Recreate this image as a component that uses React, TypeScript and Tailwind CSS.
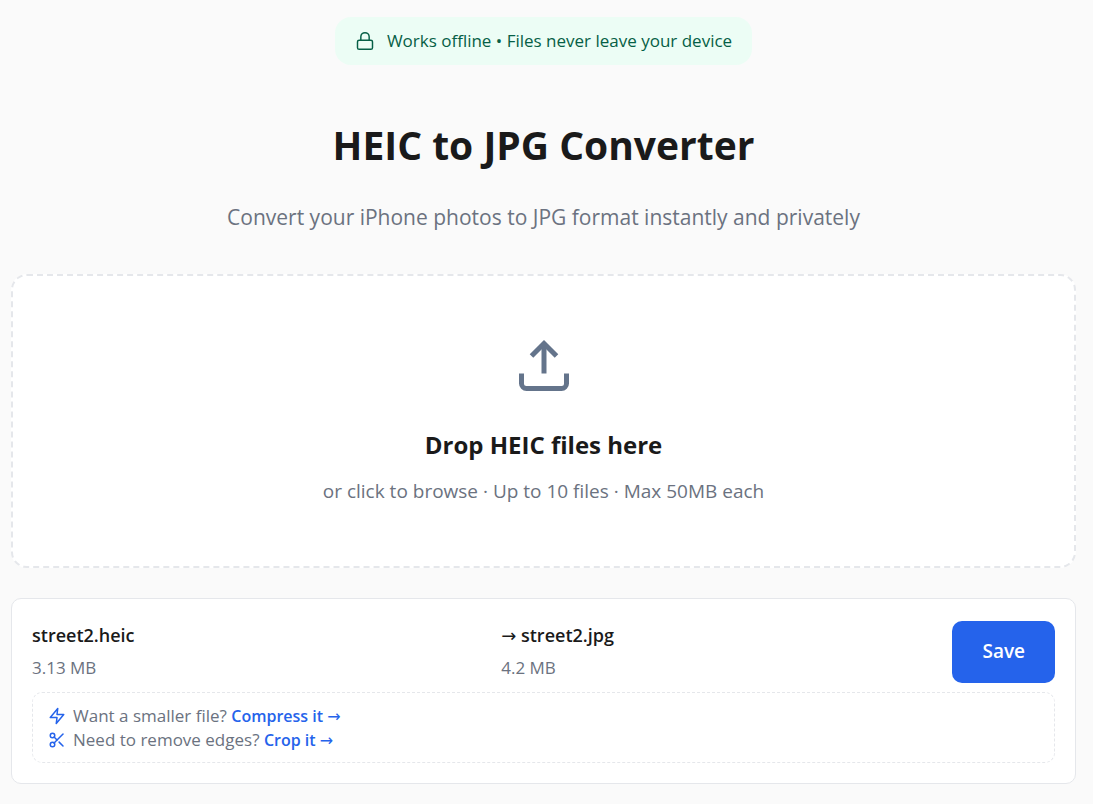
import React from 'react';
import { Lock, Scissors } from 'lucide-react';

const UploadIcon: React.FC = () => (
  <svg className="w-15 h-15 text-[#64748b]" viewBox="0 0 24 24" fill="none" stroke="currentColor" strokeWidth="2" aria-hidden="true">
    <path d="M21 15v4a2 2 0 0 1-2 2H5a2 2 0 0 1-2-2v-4" />
    <path d="M17 8l-5-5-5 5" />
    <path d="M12 3v12" />
  </svg>
);

const BoltIcon: React.FC = () => (
  <svg className="w-[18px] h-[18px] text-[#2563eb]" viewBox="0 0 24 24" fill="none" stroke="currentColor" strokeWidth="2" strokeLinecap="round" strokeLinejoin="round" aria-hidden="true">
    <path d="M13 2L3 14h9l-1 8 10-12h-9l1-8z" />
  </svg>
);

const Arrow: React.FC = () => <span className="font-['DejaVu_Sans',sans-serif] font-normal leading-none">→</span>;

const Header: React.FC = () => (
  <header className="flex flex-col items-center text-center">
    <div className="flex items-center gap-3 px-5 h-12 rounded-2xl bg-[#ecfdf5] text-[#065f46] text-[17px] font-medium">
      <Lock size={20} strokeWidth={1.75} aria-hidden="true" />
      <span>Works offline • Files never leave your device</span>
    </div>
    <h1 className="mt-[55px] text-[39px] leading-[50px] font-bold text-[#1a1a1a]">HEIC to JPG Converter</h1>
    <p className="mt-7 text-[21px] leading-[38px] text-[#6b7280]">
      Convert your iPhone photos to JPG format instantly and privately
    </p>
  </header>
);

const DropZone: React.FC = () => (
  <button
    type="button"
    className="mt-[38px] w-full flex flex-col items-center py-[60px] rounded-2xl border-2 border-dashed border-[#e5e7eb] bg-white cursor-pointer"
  >
    <UploadIcon />
    <span className="mt-[31px] text-2xl leading-[36px] font-bold text-[#1a1a1a]">Drop HEIC files here</span>
    <span className="mt-[13px] text-[19px] leading-[30px] text-[#6b7280]">
      or click to browse · Up to 10 files · Max 50MB each
    </span>
  </button>
);

const FileCard: React.FC = () => (
  <section className="mt-[30px] p-5 rounded-[10px] border border-[#e5e7eb] bg-white">
    <div className="flex items-center gap-5">
      <div className="flex-1 min-w-0">
        <div className="text-[18px] leading-8 font-semibold text-[#1a1a1a]">street2.heic</div>
        <div className="text-[17px] leading-[33px] text-[#6b7280]">3.13 MB</div>
      </div>
      <div className="flex-1 min-w-0 pl-[18px]">
        <div className="text-[18px] leading-8 font-semibold text-[#1a1a1a]"><Arrow /> street2.jpg</div>
        <div className="text-[17px] leading-[33px] text-[#6b7280]">4.2 MB</div>
      </div>
      <button type="button" className="px-[30px] h-[62px] rounded-[10px] bg-[#2563eb] text-[19px] font-semibold text-white cursor-pointer">
        Save
      </button>
    </div>

    <div className="mt-2 px-[15px] pt-[11px] pb-[10px] rounded-[10px] border border-dashed border-[#e5e7eb] text-[17px] leading-6 text-[#6b7280]">
      <p className="flex items-center gap-[7px]">
        <BoltIcon />
        <span>
          Want a smaller file?{' '}
          <a href="#compress" className="text-[16px] leading-none font-semibold text-[#2563eb]">Compress it <Arrow /></a>
        </span>
      </p>
      <p className="flex items-center gap-[7px]">
        <Scissors size={18} className="text-[#2563eb]" aria-hidden="true" />
        <span>
          Need to remove edges?{' '}
          <a href="#crop" className="text-[16px] leading-none font-semibold text-[#2563eb]">Crop it <Arrow /></a>
        </span>
      </p>
    </div>
  </section>
);

const App: React.FC = () => {
  return (
    <main className="min-h-screen bg-[#fafafa] pt-[17px] pb-5 pl-[11px] pr-[17px] font-['Open_Sans',sans-serif]">
      <Header />
      <DropZone />
      <FileCard />
    </main>
  );
};

export default App;
